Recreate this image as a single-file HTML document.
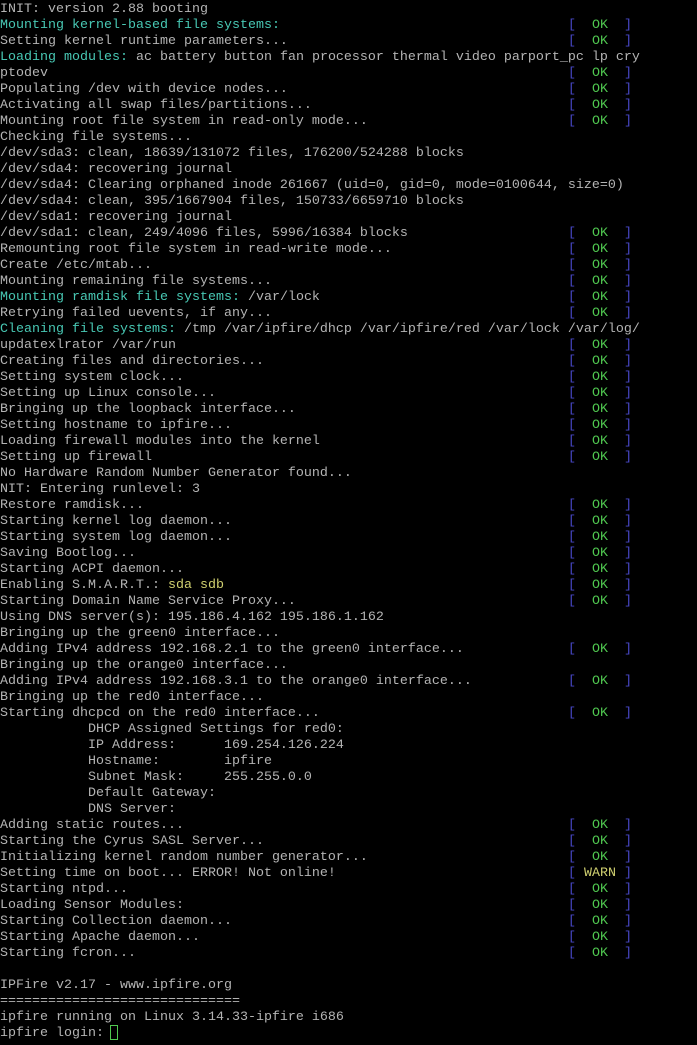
<!DOCTYPE html>
<html><head><meta charset="utf-8"><style>
html,body{margin:0;padding:0;background:#000;width:697px;height:1045px;overflow:hidden}
#t{font-family:"Liberation Mono","Courier New",monospace;font-size:13.33px;color:#b4b4b4;padding-top:2px}
.l{position:relative;height:16px;line-height:16px;white-space:pre}
.c{color:#48c8b4}.y{color:#d0d070}
.s{position:absolute;left:568px;top:0;white-space:pre}
.b{color:#4848c8}.g{color:#50c850}
.cur{position:absolute;left:110px;top:1025px;width:6px;height:13px;border:1px solid #50c850}
</style></head><body><div id="t">
<div class="l">INIT: version 2.88 booting</div>
<div class="l"><span class="c">Mounting kernel-based file systems:</span><span class="s"><span class="b">[</span>  <span class="g">OK</span>  <span class="b">]</span></span></div>
<div class="l">Setting kernel runtime parameters...<span class="s"><span class="b">[</span>  <span class="g">OK</span>  <span class="b">]</span></span></div>
<div class="l"><span class="c">Loading modules:</span> ac battery button fan processor thermal video parport_pc lp cry</div>
<div class="l">ptodev<span class="s"><span class="b">[</span>  <span class="g">OK</span>  <span class="b">]</span></span></div>
<div class="l">Populating /dev with device nodes...<span class="s"><span class="b">[</span>  <span class="g">OK</span>  <span class="b">]</span></span></div>
<div class="l">Activating all swap files/partitions...<span class="s"><span class="b">[</span>  <span class="g">OK</span>  <span class="b">]</span></span></div>
<div class="l">Mounting root file system in read-only mode...<span class="s"><span class="b">[</span>  <span class="g">OK</span>  <span class="b">]</span></span></div>
<div class="l">Checking file systems...</div>
<div class="l">/dev/sda3: clean, 18639/131072 files, 176200/524288 blocks</div>
<div class="l">/dev/sda4: recovering journal</div>
<div class="l">/dev/sda4: Clearing orphaned inode 261667 (uid=0, gid=0, mode=0100644, size=0)</div>
<div class="l">/dev/sda4: clean, 395/1667904 files, 150733/6659710 blocks</div>
<div class="l">/dev/sda1: recovering journal</div>
<div class="l">/dev/sda1: clean, 249/4096 files, 5996/16384 blocks<span class="s"><span class="b">[</span>  <span class="g">OK</span>  <span class="b">]</span></span></div>
<div class="l">Remounting root file system in read-write mode...<span class="s"><span class="b">[</span>  <span class="g">OK</span>  <span class="b">]</span></span></div>
<div class="l">Create /etc/mtab...<span class="s"><span class="b">[</span>  <span class="g">OK</span>  <span class="b">]</span></span></div>
<div class="l">Mounting remaining file systems...<span class="s"><span class="b">[</span>  <span class="g">OK</span>  <span class="b">]</span></span></div>
<div class="l"><span class="c">Mounting ramdisk file systems:</span> /var/lock<span class="s"><span class="b">[</span>  <span class="g">OK</span>  <span class="b">]</span></span></div>
<div class="l">Retrying failed uevents, if any...<span class="s"><span class="b">[</span>  <span class="g">OK</span>  <span class="b">]</span></span></div>
<div class="l"><span class="c">Cleaning file systems:</span> /tmp /var/ipfire/dhcp /var/ipfire/red /var/lock /var/log/</div>
<div class="l">updatexlrator /var/run<span class="s"><span class="b">[</span>  <span class="g">OK</span>  <span class="b">]</span></span></div>
<div class="l">Creating files and directories...<span class="s"><span class="b">[</span>  <span class="g">OK</span>  <span class="b">]</span></span></div>
<div class="l">Setting system clock...<span class="s"><span class="b">[</span>  <span class="g">OK</span>  <span class="b">]</span></span></div>
<div class="l">Setting up Linux console...<span class="s"><span class="b">[</span>  <span class="g">OK</span>  <span class="b">]</span></span></div>
<div class="l">Bringing up the loopback interface...<span class="s"><span class="b">[</span>  <span class="g">OK</span>  <span class="b">]</span></span></div>
<div class="l">Setting hostname to ipfire...<span class="s"><span class="b">[</span>  <span class="g">OK</span>  <span class="b">]</span></span></div>
<div class="l">Loading firewall modules into the kernel<span class="s"><span class="b">[</span>  <span class="g">OK</span>  <span class="b">]</span></span></div>
<div class="l">Setting up firewall<span class="s"><span class="b">[</span>  <span class="g">OK</span>  <span class="b">]</span></span></div>
<div class="l">No Hardware Random Number Generator found...</div>
<div class="l">NIT: Entering runlevel: 3</div>
<div class="l">Restore ramdisk...<span class="s"><span class="b">[</span>  <span class="g">OK</span>  <span class="b">]</span></span></div>
<div class="l">Starting kernel log daemon...<span class="s"><span class="b">[</span>  <span class="g">OK</span>  <span class="b">]</span></span></div>
<div class="l">Starting system log daemon...<span class="s"><span class="b">[</span>  <span class="g">OK</span>  <span class="b">]</span></span></div>
<div class="l">Saving Bootlog...<span class="s"><span class="b">[</span>  <span class="g">OK</span>  <span class="b">]</span></span></div>
<div class="l">Starting ACPI daemon...<span class="s"><span class="b">[</span>  <span class="g">OK</span>  <span class="b">]</span></span></div>
<div class="l">Enabling S.M.A.R.T.: <span class="y">sda sdb</span><span class="s"><span class="b">[</span>  <span class="g">OK</span>  <span class="b">]</span></span></div>
<div class="l">Starting Domain Name Service Proxy...<span class="s"><span class="b">[</span>  <span class="g">OK</span>  <span class="b">]</span></span></div>
<div class="l">Using DNS server(s): 195.186.4.162 195.186.1.162</div>
<div class="l">Bringing up the green0 interface...</div>
<div class="l">Adding IPv4 address 192.168.2.1 to the green0 interface...<span class="s"><span class="b">[</span>  <span class="g">OK</span>  <span class="b">]</span></span></div>
<div class="l">Bringing up the orange0 interface...</div>
<div class="l">Adding IPv4 address 192.168.3.1 to the orange0 interface...<span class="s"><span class="b">[</span>  <span class="g">OK</span>  <span class="b">]</span></span></div>
<div class="l">Bringing up the red0 interface...</div>
<div class="l">Starting dhcpcd on the red0 interface...<span class="s"><span class="b">[</span>  <span class="g">OK</span>  <span class="b">]</span></span></div>
<div class="l">           DHCP Assigned Settings for red0:</div>
<div class="l">           IP Address:      169.254.126.224</div>
<div class="l">           Hostname:        ipfire</div>
<div class="l">           Subnet Mask:     255.255.0.0</div>
<div class="l">           Default Gateway:</div>
<div class="l">           DNS Server:</div>
<div class="l">Adding static routes...<span class="s"><span class="b">[</span>  <span class="g">OK</span>  <span class="b">]</span></span></div>
<div class="l">Starting the Cyrus SASL Server...<span class="s"><span class="b">[</span>  <span class="g">OK</span>  <span class="b">]</span></span></div>
<div class="l">Initializing kernel random number generator...<span class="s"><span class="b">[</span>  <span class="g">OK</span>  <span class="b">]</span></span></div>
<div class="l">Setting time on boot... ERROR! Not online!<span class="s"><span class="b">[</span> <span class="y">WARN</span> <span class="b">]</span></span></div>
<div class="l">Starting ntpd...<span class="s"><span class="b">[</span>  <span class="g">OK</span>  <span class="b">]</span></span></div>
<div class="l">Loading Sensor Modules:<span class="s"><span class="b">[</span>  <span class="g">OK</span>  <span class="b">]</span></span></div>
<div class="l">Starting Collection daemon...<span class="s"><span class="b">[</span>  <span class="g">OK</span>  <span class="b">]</span></span></div>
<div class="l">Starting Apache daemon...<span class="s"><span class="b">[</span>  <span class="g">OK</span>  <span class="b">]</span></span></div>
<div class="l">Starting fcron...<span class="s"><span class="b">[</span>  <span class="g">OK</span>  <span class="b">]</span></span></div>
<div class="l"> </div>
<div class="l">IPFire v2.17 - www.ipfire.org</div>
<div class="l">==============================</div>
<div class="l">ipfire running on Linux 3.14.33-ipfire i686</div>
<div class="l">ipfire login: </div>
</div><div class="cur"></div></body></html>
